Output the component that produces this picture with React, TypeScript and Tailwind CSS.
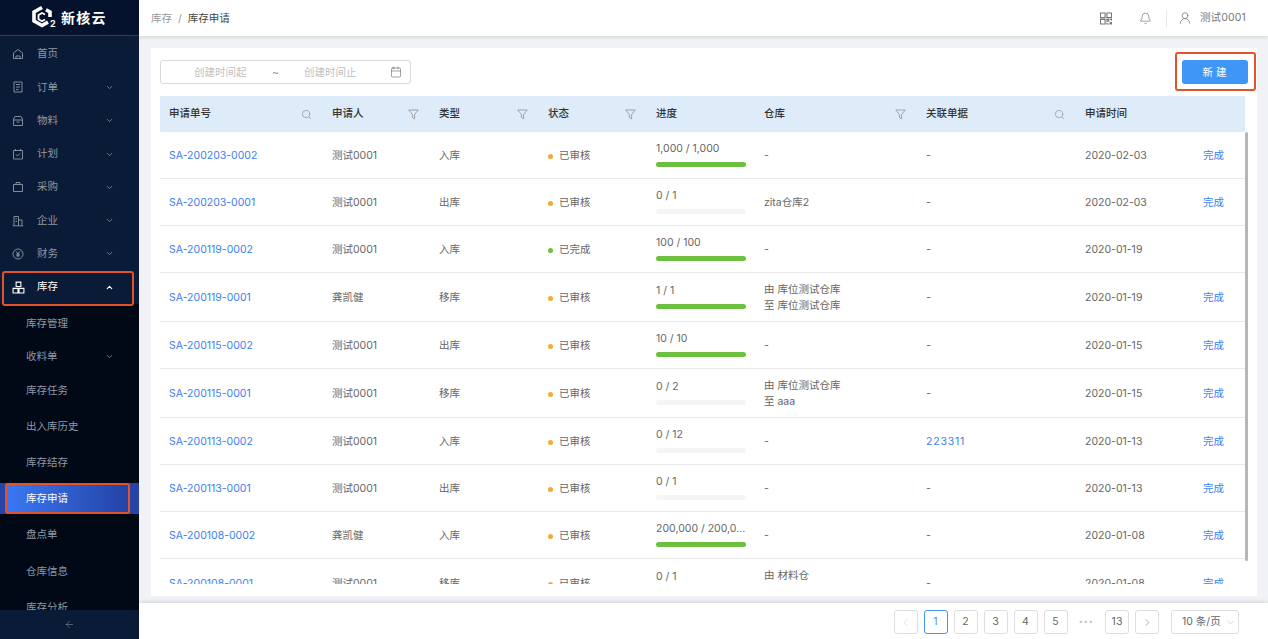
import { ChevronDown, ChevronLeft, ChevronRight, ChevronUp, Search, Bell, UserRound, Calendar, ArrowLeft } from "lucide-react";
import type { ReactNode } from "react";

const font = { fontFamily: '"Inter", "Noto Sans CJK SC", sans-serif' };

function Svg({ children, size = 12 }: { children: ReactNode; size?: number }) {
  return (
    <svg width={size} height={size} viewBox="0 0 12 12" fill="none" stroke="currentColor" strokeWidth="0.9">
      {children}
    </svg>
  );
}

const icons: Record<string, ReactNode> = {
  home: (
    <Svg>
      <path d="M1.5 5 6 1.5 10.5 5v5.5h-9zM4 10.5V8h4v2.5" />
    </Svg>
  ),
  order: (
    <Svg>
      <path d="M2 1h8v10H2zM4 3.5h4M4 6h4M4 8.5h2.5" />
    </Svg>
  ),
  material: (
    <Svg>
      <path d="M1.5 4 3 1.5h6L10.5 4v6.5h-9zM1.5 5h9M4.5 7h3" />
    </Svg>
  ),
  plan: (
    <Svg>
      <path d="M1.5 2.5h9v8.500h-9zM3.500 1v2M8.500 1v2M4 6.500 5.500 8 8 5.500" />
    </Svg>
  ),
  buy: (
    <Svg>
      <path d="M1.500 3.500h9v7h-9zM4 3.500V1.500h4v2" />
    </Svg>
  ),
  company: (
    <Svg>
      <path d="M2 10.500V1.500h4.500v9M6.500 5h3.500v5.500M.8 10.800h10.400M3.500 4h1.500M3.500 6.500h1.500" />
    </Svg>
  ),
  money: (
    <Svg>
      <circle cx="6" cy="6" r="5" />
      <path d="M4 3.300 6 6l2-2.700M6 6v3M4.200 6.300h3.600M4.200 7.800h3.600" />
    </Svg>
  ),
  stock: (
    <Svg size={13}>
      <path d="M3.800 1h4.400v4H3.800zM1 6.800h4.500v4.200H1zM6.500 6.800H11v4.200H6.500zM.5 11h11" strokeWidth="1" />
    </Svg>
  ),
};

const menu = [
  { label: "首页", icon: "home" },
  { label: "订单", icon: "order", arrow: true },
  { label: "物料", icon: "material", arrow: true },
  { label: "计划", icon: "plan", arrow: true },
  { label: "采购", icon: "buy", arrow: true },
  { label: "企业", icon: "company", arrow: true },
  { label: "财务", icon: "money", arrow: true },
];

const subMenu = [
  { label: "库存管理", cls: "h-[31px] mb-px" },
  { label: "收料单", cls: "h-[33px] mb-[2px]", arrow: true },
  { label: "库存任务", cls: "h-[31px] mb-[5px]" },
  { label: "出入库历史", cls: "h-[31px] mb-[5px]" },
  { label: "库存结存", cls: "h-[31px] mb-[5px]" },
  { label: "库存申请", cls: "h-[31px] mb-[5px]", active: true },
  { label: "盘点单", cls: "h-[31px] mb-[5.5px]" },
  { label: "仓库信息", cls: "h-[31px] mb-[5.5px]" },
  { label: "库存分析", cls: "h-[31px] mb-[5px]" },
];

function Sidebar() {
  return (
    <aside className="flex h-full w-[139px] shrink-0 flex-col overflow-hidden bg-[#0a1b37] text-[10.5px] text-[#8f98a6]">
      <div className="flex h-[36px] shrink-0 items-center border-b border-[#1b3f80] bg-[#05122d] pl-[31px]">
        <svg width="26" height="24" viewBox="0 0 26 24" className="-mt-[2px]">
          <path d="M11 2.500 3 7v9l8 4.500 6-3.400M19 12V7l-4-2.300" fill="none" stroke="#fff" strokeWidth="3.600" />
          <path d="M14 9.500 11 8 7.500 10v4.200l3.500 2 3-1.700" fill="none" stroke="#fff" strokeWidth="1.800" />
        </svg>
        <span className="-ml-[7px] mt-[11px] w-[8px] text-[9px] font-bold leading-none text-white">2</span>
        <span className="ml-[3px] text-[14px] font-semibold tracking-[1.2px] text-white">新核云</span>
      </div>
      <nav className="pt-[1.5px]">
        {menu.map((item) => (
          <div key={item.label} className="flex h-[33.3px] items-center pl-[12px] pr-[25px]">
            <span className="flex w-[25px]">{icons[item.icon]}</span>
            <span className="flex-1">{item.label}</span>
            {item.arrow && <ChevronDown size={9} strokeWidth={2} />}
          </div>
        ))}
        <div className="relative flex h-[33.3px] items-center pl-[12px] pr-[25px] text-white">
          <span className="absolute left-[2px] right-[5px] top-0 -bottom-[2px] rounded-[3px] border-2 border-[#e5522a]" />
          <span className="flex w-[25px]">{icons.stock}</span>
          <span className="flex-1">库存</span>
          <ChevronUp size={9} strokeWidth={3} />
        </div>
      </nav>
      <div className="min-h-0 flex-1 overflow-hidden bg-[#020916] pt-[4.500px]">
        {subMenu.map((item) =>
          item.active ? (
            <div key={item.label} className={`${item.cls} bg-[#2644a8] px-[5px]`}>
              <div className="flex h-full w-[125px] items-center rounded-[3px] border-2 border-[#e5522a] bg-linear-to-r from-[#3b78f3] to-[#2443a6] pl-[19px] text-white">
                {item.label}
              </div>
            </div>
          ) : (
            <div key={item.label} className={`${item.cls} flex items-center justify-between pl-[26px] pr-[25px]`}>
              <span>{item.label}</span>
              {item.arrow && <ChevronDown size={9} strokeWidth={2} />}
            </div>
          )
        )}
      </div>
      <div className="flex h-[29px] shrink-0 items-center justify-center bg-[#0a1b37]">
        <ArrowLeft size={11} strokeWidth={1.2} />
      </div>
    </aside>
  );
}

type Row = {
  no: string;
  who: string;
  type: string;
  status: string;
  done?: boolean;
  progress: string;
  full: boolean;
  wh: string[];
  rel?: string;
  date: string;
  action?: boolean;
  tall?: boolean;
};

const rows: Row[] = [
  { no: "SA-200203-0002", who: "测试0001", type: "入库", status: "已审核", progress: "1,000 / 1,000", full: true, wh: ["-"], date: "2020-02-03", action: true },
  { no: "SA-200203-0001", who: "测试0001", type: "出库", status: "已审核", progress: "0 / 1", full: false, wh: ["zita仓库2"], date: "2020-02-03", action: true },
  { no: "SA-200119-0002", who: "测试0001", type: "入库", status: "已完成", done: true, progress: "100 / 100", full: true, wh: ["-"], date: "2020-01-19" },
  { no: "SA-200119-0001", who: "龚凯健", type: "移库", status: "已审核", progress: "1 / 1", full: true, wh: ["由 库位测试仓库", "至 库位测试仓库"], date: "2020-01-19", action: true, tall: true },
  { no: "SA-200115-0002", who: "测试0001", type: "出库", status: "已审核", progress: "10 / 10", full: true, wh: ["-"], date: "2020-01-15", action: true },
  { no: "SA-200115-0001", who: "测试0001", type: "移库", status: "已审核", progress: "0 / 2", full: false, wh: ["由 库位测试仓库", "至 aaa"], date: "2020-01-15", action: true, tall: true },
  { no: "SA-200113-0002", who: "测试0001", type: "入库", status: "已审核", progress: "0 / 12", full: false, wh: ["-"], rel: "223311", date: "2020-01-13", action: true },
  { no: "SA-200113-0001", who: "测试0001", type: "出库", status: "已审核", progress: "0 / 1", full: false, wh: ["-"], date: "2020-01-13", action: true },
  { no: "SA-200108-0002", who: "龚凯健", type: "入库", status: "已审核", progress: "200,000 / 200,0...", full: true, wh: ["-"], date: "2020-01-08", action: true },
  { no: "SA-200108-0001", who: "测试0001", type: "移库", status: "已审核", progress: "0 / 1", full: false, wh: ["由 材料仓", "至 材料仓"], date: "2020-01-08", action: true, tall: true },
];

const cols = "grid grid-cols-[163px_107px_109px_108px_108px_162px_159px_127px_42px]";

function FilterIcon() {
  return (
    <svg width="11" height="11" viewBox="0 0 11 11" fill="none" stroke="#8f8f8f" strokeWidth="0.8">
      <path d="M.8 1h9.400L6.600 5.500v4.300l-2.200-1.300v-3z" />
    </svg>
  );
}

function HeadCell({ label, icon, iconRight }: { label?: string; icon?: "search" | "filter"; iconRight: string }) {
  return (
    <div className={`flex items-center justify-between pl-[9px] ${iconRight}`}>
      <span className="font-medium text-[#333]">{label}</span>
      {icon === "search" && <Search size={11} strokeWidth={1.4} className="text-[#8c8c8c]" />}
      {icon === "filter" && <FilterIcon />}
    </div>
  );
}

function Table() {
  return (
    <div className="relative h-[488px] w-[1085px] overflow-hidden text-[10.5px] text-[#666]">
      <div className={`${cols} h-[36px] bg-[#deebf9]`}>
        <HeadCell label="申请单号" icon="search" iconRight="pr-[11px]" />
        <HeadCell label="申请人" icon="filter" iconRight="pr-[11px]" />
        <HeadCell label="类型" icon="filter" iconRight="pr-[11px]" />
        <HeadCell label="状态" icon="filter" iconRight="pr-[11px]" />
        <HeadCell label="进度" iconRight="" />
        <HeadCell label="仓库" icon="filter" iconRight="pr-[11px]" />
        <HeadCell label="关联单据" icon="search" iconRight="pr-[11px]" />
        <HeadCell label="申请时间" iconRight="" />
        <div />
      </div>
      {rows.map((r) => (
        <div key={r.no} className={`${cols} ${r.tall ? "h-[49px]" : "h-[47px]"} items-center border-b border-[#e9e9e9] bg-white pt-[2px]`}>
          <div className="pl-[9px] text-[#3d7ef0]">{r.no}</div>
          <div className="pl-[9px]">{r.who}</div>
          <div className="pl-[9px]">{r.type}</div>
          <div className="flex items-center gap-[6px] pl-[9px]">
            <span className={`size-[5px] rounded-full ${r.done ? "bg-[#6cbf3f]" : "bg-[#f5a833]"}`} />
            {r.status}
          </div>
          <div className="-mt-[4px] pl-[9px]">
            <div className="mb-[6px] leading-[14px]">{r.progress}</div>
            <div className={`h-[5px] w-[90px] rounded-full ${r.full ? "bg-[#6cbf3f]" : "bg-[#f5f5f5]"}`} />
          </div>
          <div className="pl-[9px] leading-[16px]">
            {r.wh.map((line) => (
              <div key={line}>{line}</div>
            ))}
          </div>
          <div className="pl-[9px]">{r.rel ? <span className="tracking-[0.8px] text-[#3d7ef0]">{r.rel}</span> : "-"}</div>
          <div className="pl-[9px]">{r.date}</div>
          <div className="text-[#3d7ef0]">{r.action && "完成"}</div>
        </div>
      ))}
    </div>
  );
}

function PageBtn({ children, active }: { children: ReactNode; active?: boolean }) {
  return (
    <div className={`flex size-[24px] items-center justify-center rounded-[3px] border ${active ? "border-[#4096f5] text-[#4096f5]" : "border-[#dedede] text-[#666]"}`}>
      {children}
    </div>
  );
}

export default function App() {
  return (
    <div className="flex h-[639px] w-[1268px] overflow-hidden bg-[#f0f2f5]" style={font}>
      <Sidebar />
      <main className="flex min-w-0 flex-1 flex-col">
        <header className="z-10 flex h-[36px] shrink-0 items-center justify-between bg-white pl-[12px] pr-[22px] text-[10.5px] shadow-[0_1px_4px_rgba(0,0,0,0.14)]">
          <div className="flex items-center gap-[6px] pt-[2px]">
            <span className="text-[#999]">库存</span>
            <span className="text-[#999]">/</span>
            <span className="text-[#444]">库存申请</span>
          </div>
          <div className="flex items-center text-[#777]">
            <svg width="12" height="13" viewBox="0 0 13 13" fill="none" stroke="currentColor" strokeWidth="1.2">
              <path d="M.5.500h5v5h-5zM7.500.500h5v5h-5zM.5 7.500h5v5h-5zM7.500 7.500h2v2h-2zM11 7.500h1.500v1.500M7.500 11v1.500h2M11 11h1.500v1.500H11z" />
            </svg>
            <Bell size={13} strokeWidth={1.3} className="ml-[27px]" />
            <span className="ml-[14px] h-[18px] w-px bg-[#e8e8e8]" />
            <UserRound size={14} strokeWidth={1.3} className="ml-[11px]" />
            <span className="ml-[8px] tracking-[0.15px] text-[#777]">测试0001</span>
          </div>
        </header>
        <div className="min-h-0 flex-1 px-[12px] pt-[12px] pb-[7px]">
          <section className="relative h-[548px] w-[1106px] bg-white pl-[9px] pt-[12px]">
            <div className="flex h-[36px] items-start justify-between pr-[9px]">
              <div className="flex h-[24px] w-[251px] items-center rounded-[3px] border border-[#d9d9d9] pl-[33px] pr-[8px] pt-[2px] text-[10.5px] text-[#bfbfbf]">
                <span className="w-[78px]">创建时间起</span>
                <span className="w-[32px] text-[#8c8c8c]">~</span>
                <span className="flex-1">创建时间止</span>
                <Calendar size={12} strokeWidth={1.2} className="-mt-[3px] text-[#666]" />
              </div>
              <div className="relative flex h-[24px] w-[66px] items-center justify-center rounded-[3px] bg-[#4096f5] pl-[2px] pt-[2px] text-[10.5px] text-white">
                <span className="tracking-[3px]">新建</span>
                <span className="absolute -left-[7px] -right-[8px] -top-[8px] -bottom-[7px] rounded-[3px] border-2 border-[#e5522a]" />
              </div>
            </div>
            <Table />
            <div className="absolute left-[1094px] top-[84px] h-[429px] w-[3px] rounded-full bg-[#b4b8bd]" />
          </section>
        </div>
        <footer className="z-10 flex h-[36px] shrink-0 items-center justify-end gap-[6px] bg-white pr-[29px] pt-[2px] text-[10.5px] shadow-[0_-1px_4px_rgba(0,0,0,0.12)]">
          <PageBtn>
            <ChevronLeft size={11} strokeWidth={1.2} className="text-[#bfbfbf]" />
          </PageBtn>
          <PageBtn active>1</PageBtn>
          <PageBtn>2</PageBtn>
          <PageBtn>3</PageBtn>
          <PageBtn>4</PageBtn>
          <PageBtn>5</PageBtn>
          <span className="flex w-[25.5px] justify-center text-[7px] tracking-[1px] text-[#bfbfbf]">•••</span>
          <PageBtn>13</PageBtn>
          <PageBtn>
            <ChevronRight size={11} strokeWidth={1.2} className="text-[#666]" />
          </PageBtn>
          <div className="ml-[6px] flex h-[24px] w-[68px] items-center justify-between rounded-[3px] border border-[#dedede] pl-[10px] pr-[2px] text-[#666]">
            <span>10 条/页</span>
            <ChevronDown size={11} strokeWidth={1} className="text-[#aaa]" />
          </div>
        </footer>
      </main>
    </div>
  );
}
